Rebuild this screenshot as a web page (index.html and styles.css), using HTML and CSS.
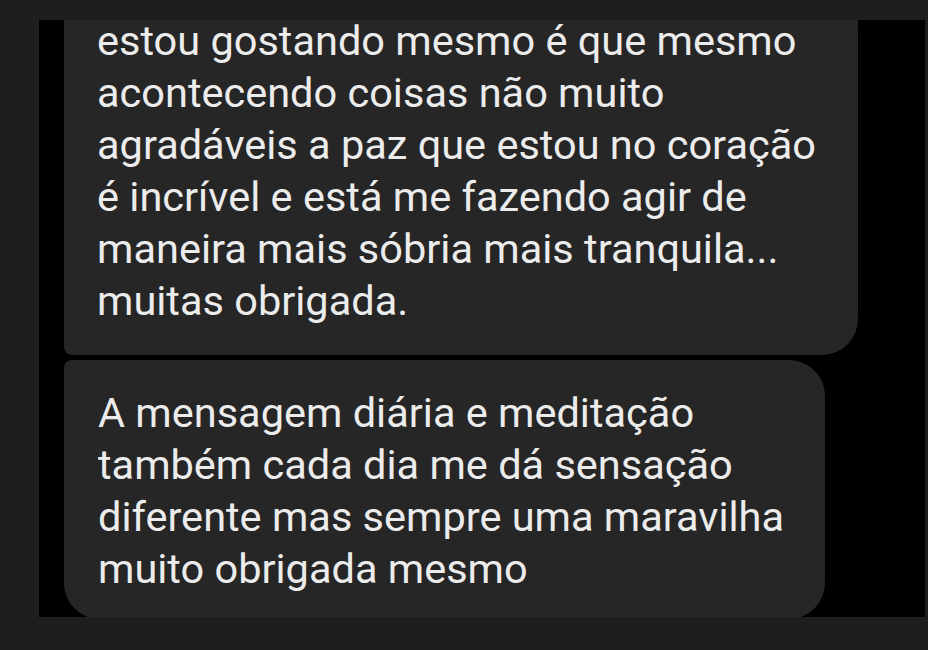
FILE: index.html
```html
<!DOCTYPE html>
<html lang="pt">
<head>
<meta charset="utf-8">
<link rel="stylesheet" href="styles.css">
</head>
<body>
<div class="panel">
  <div class="bubble bubble-first">
    <p class="msg">estou gostando mesmo é que mesmo<br>acontecendo coisas não muito<br>agradáveis a paz que estou no coração<br>é incrível e está me fazendo agir de<br>maneira mais sóbria mais tranquila...<br>muitas obrigada.</p>
  </div>
  <div class="bubble bubble-last">
    <p class="msg">A mensagem diária e meditação<br>também cada dia me dá sensação<br>diferente mas sempre uma maravilha<br>muito obrigada mesmo</p>
  </div>
</div>
</body>
</html>
```
FILE: styles.css
```css
html, body {
  margin: 0;
  padding: 0;
  background: #1e1e1e;
  width: 928px;
  height: 650px;
  overflow: hidden;
}
.panel {
  margin: 20px 0 0 39px;
  width: 886px;
  height: 597px;
  background: #000;
  overflow: hidden;
  display: flex;
  flex-direction: column;
  align-items: flex-start;
  gap: 5px;
  padding-left: 25px;
  box-sizing: border-box;
}
.bubble {
  background: #262626;
  box-sizing: border-box;
}
.bubble-first {
  margin-top: -31px;
  width: 794px;
  padding: 26px 10px 28px 33px;
  border-radius: 8px 36px 36px 8px;
}
.bubble-last {
  width: 761px;
  padding: 27px 10px 24px 34px;
  border-radius: 8px 36px 36px 36px;
}
.msg {
  margin: 0;
  font-family: Roboto, "Noto Sans", sans-serif;
  font-size: 41.5px;
  line-height: 52px;
  color: #ececec;
  white-space: nowrap;
}
```
